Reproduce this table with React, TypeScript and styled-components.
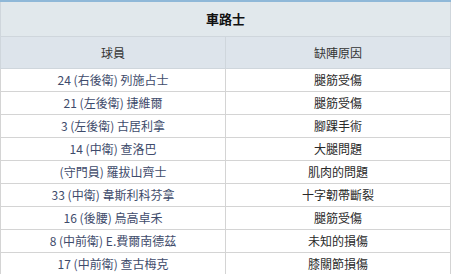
import styled, { createGlobalStyle } from "styled-components";

const GlobalStyle = createGlobalStyle`
  body {
    margin: 0;
    background: #fff;
    font-family: "Noto Sans CJK TC", "Noto Sans", sans-serif;
  }
`;

const injuries = [
  { player: "24 (右後衛) 列施占士", reason: "腿筋受傷" },
  { player: "21 (左後衛) 捷維爾", reason: "腿筋受傷" },
  { player: "3 (左後衛) 古居利拿", reason: "腳踝手術" },
  { player: "14 (中衛) 查洛巴", reason: "大腿問題" },
  { player: "(守門員) 羅拔山齊士", reason: "肌肉的問題" },
  { player: "33 (中衛) 韋斯利科芬拿", reason: "十字韌帶斷裂" },
  { player: "16 (後腰) 烏高卓禾", reason: "腿筋受傷" },
  { player: "8 (中前衛) E.費爾南德茲", reason: "未知的損傷" },
  { player: "17 (中前衛) 查古梅克", reason: "膝關節損傷" },
];

const App = () => {
  return (
    <>
      <GlobalStyle />
      <Wrapper>
        <Table>
          <thead>
            <tr>
              <TitleCell colSpan={2}>車路士</TitleCell>
            </tr>
            <tr>
              <HeadCell $width={202}>球員</HeadCell>
              <HeadCell>缺陣原因</HeadCell>
            </tr>
          </thead>
          <tbody>
            {injuries.map((row) => (
              <tr key={row.player}>
                <PlayerCell>{row.player}</PlayerCell>
                <ReasonCell>{row.reason}</ReasonCell>
              </tr>
            ))}
          </tbody>
        </Table>
      </Wrapper>
    </>
  );
};
export default App;

const Wrapper = styled.div`
  width: 451px;
  border-top: 2px solid #8fb8d8;
`;

const Table = styled.table`
  width: 100%;
  border-collapse: collapse;
  table-layout: fixed;
  font-size: 12px;
  line-height: 16px;
`;

const TitleCell = styled.th`
  height: 34px;
  padding: 0;
  background: #e1e8ec;
  border: 1px solid #cfd6dc;
  border-top: none;
  color: #111;
  font-size: 13px;
  font-weight: bold;
  text-align: center;
`;

const HeadCell = styled.th<{ $width?: number }>`
  width: ${(p) => (p.$width ? `${p.$width}px` : "auto")};
  height: 31px;
  padding: 0;
  background: #dde4eb;
  border: 1px solid #cfd6dc;
  color: #333;
  font-weight: normal;
  text-align: center;
`;

const PlayerCell = styled.td`
  height: 22px;
  padding: 0;
  border: 1px solid #d4d4d4;
  color: #3e4b6b;
  text-align: center;
  white-space: nowrap;
`;

const ReasonCell = styled(PlayerCell)`
  color: #2a2a2a;
`;
